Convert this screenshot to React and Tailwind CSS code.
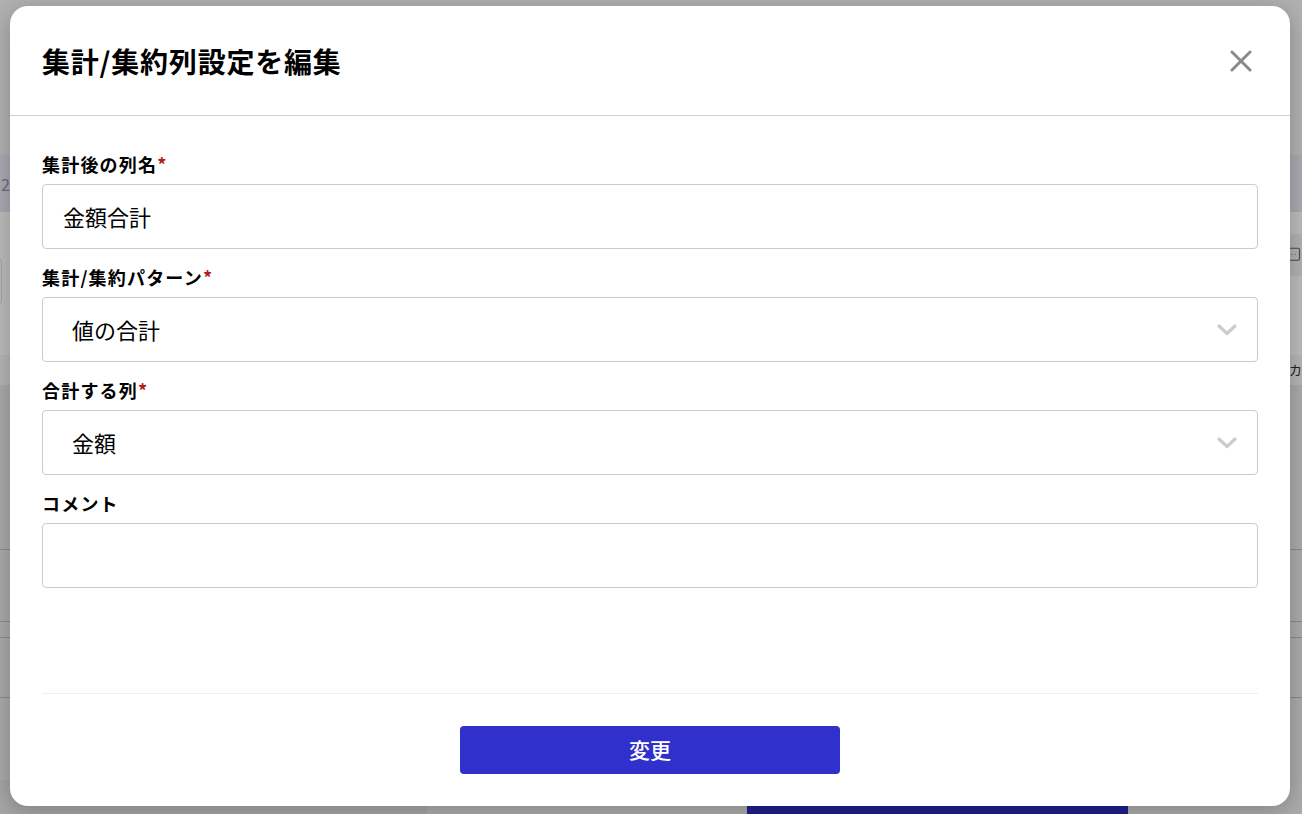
import React from 'react';
import { MessageSquareMore } from 'lucide-react';

const font = { fontFamily: '"Noto Sans CJK JP", "Noto Sans", sans-serif' };

const Chevron = () => (
  <svg width="22" height="14" viewBox="0 0 22 14" fill="none">
    <path d="M3 3 L11 10.5 L19 3" stroke="#cccccc" strokeWidth="3.2" strokeLinecap="round" strokeLinejoin="round" />
  </svg>
);

const Label = ({ children, required }) => (
  <div className="h-6 flex items-center text-[18px] font-bold text-black leading-6 mb-2 tracking-[1.2px]">
    {children}
    {required && <span className="text-[#b01c1c]">*</span>}
  </div>
);

const Select = ({ value }) => (
  <div className="h-[65px] border border-[#cccccc] rounded-[4px] flex items-center justify-between pl-[29px] pr-[19px] text-[22px] text-black">
    <span>{value}</span>
    <Chevron />
  </div>
);

// page sitting behind the dimmed backdrop
const Backdrop = () => (
  <div className="w-full h-[814px] flex flex-col bg-[#ababab] overflow-hidden">
    <div className="h-[155px] bg-[#b2b2b2]" />
    <div className="h-[57px] bg-[#a9aab3] flex items-center text-[#6d6d85] text-[16px]">
      <span className="pl-[1px]">2</span>
    </div>
    <div className="h-[143px] bg-[#bdbdbd] flex items-start justify-between">
      <div className="mt-[46px] -ml-[40px] w-[42px] h-[47px] border border-[#a3a3a3] rounded-[4px]" />
      <div className="mt-[22px] w-[26px] h-[42px] rounded-l-full bg-[#b2b2b2] flex items-center justify-end pr-[1px]">
        <MessageSquareMore size={18} strokeWidth={1.5} color="#4a4a4a" />
      </div>
    </div>
    <div className="h-[30px] bg-[#b6b6b6] flex items-center justify-end text-[13px] text-[#222]">
      <span>カ</span>
    </div>
    <div className="h-[165px] border-b border-[#8c8c8c]" />
    <div className="h-[72px] border-b border-[#8c8c8c]" />
    <div className="h-[16px] border-b border-[#8c8c8c]" />
    <div className="h-[60px] border-b border-[#8c8c8c]" />
    <div className="flex-1 flex items-end">
      <div className="w-[427px] h-[34px] bg-[#a6a6a6]" />
      <div className="w-[320px] h-[34px] bg-[#adadad]" />
      <div className="w-[381px] h-[34px] bg-[#1f1f8e]" />
      <div className="flex-1 h-[34px] bg-[#acacac]" />
    </div>
  </div>
);

export default function App() {
  return (
    <div className="relative w-full h-[814px] overflow-hidden" style={font}>
      <Backdrop />

      <div className="absolute left-[10px] top-[6px] w-[1280px] h-[800px] bg-white rounded-[18px] shadow-[0_4px_24px_rgba(0,0,0,0.25)] flex flex-col">
        <div className="h-[110px] shrink-0 flex items-center justify-between pl-8 pr-[38px] border-b border-[#cfcfcf]">
          <h2 className="text-[28px] font-bold text-black tracking-[0.8px]">集計/集約列設定を編集</h2>
          <svg width="22" height="22" viewBox="0 0 22 22">
            <path d="M2 2 L20 20 M20 2 L2 20" stroke="#8a8a8a" strokeWidth="3" strokeLinecap="round" />
          </svg>
        </div>

        <div className="flex-1 flex flex-col px-8 pt-[36px]">
          <Label required>集計後の列名</Label>
          <div className="h-[65px] border border-[#cccccc] rounded-[4px] flex items-center px-5 text-[22px] text-black">
            金額合計
          </div>

          <div className="mt-4">
            <Label required>集計/集約パターン</Label>
            <Select value="値の合計" />
          </div>

          <div className="mt-4">
            <Label required>合計する列</Label>
            <Select value="金額" />
          </div>

          <div className="mt-4">
            <Label>コメント</Label>
            <div className="h-[65px] border border-[#cccccc] rounded-[4px]" />
          </div>

          <div className="mt-[105px] border-t border-[#eeeeee]" />

          <div className="flex justify-center pt-8">
            <button className="w-[380px] h-[48px] bg-[#3030cc] rounded-[4px] text-white text-[21px] font-medium">
              変更
            </button>
          </div>
        </div>
      </div>
    </div>
  );
}
